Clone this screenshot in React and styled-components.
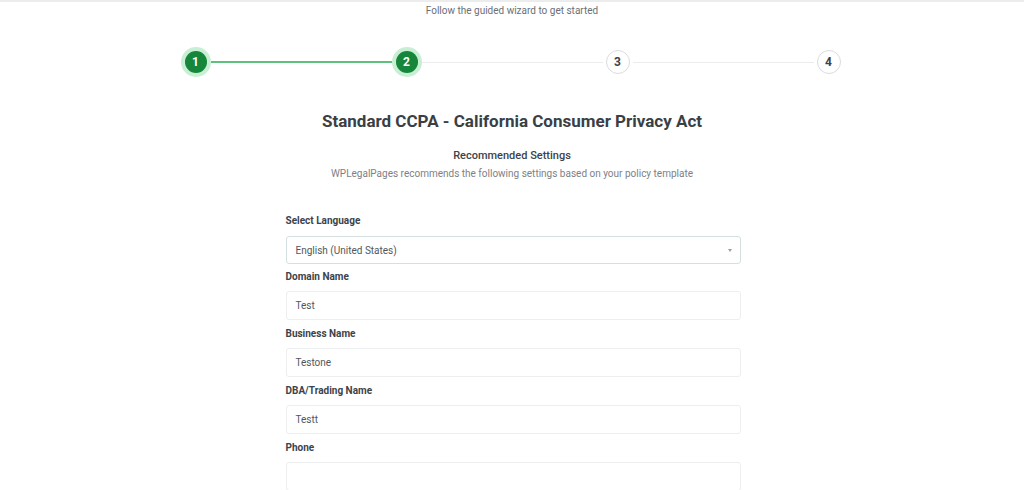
import React from 'react'
import styled, { createGlobalStyle } from 'styled-components'

const GlobalStyle = createGlobalStyle`
  html, body {
    margin: 0;
    padding: 0;
    background: #ffffff;
    font-family: Roboto, "Noto Sans", "Liberation Sans", sans-serif;
  }
`

const steps = [
  { n: 1, done: true },
  { n: 2, done: true },
  { n: 3, done: false },
  { n: 4, done: false },
]

const fields = [
  { label: 'Domain Name', value: 'Test' },
  { label: 'Business Name', value: 'Testone' },
  { label: 'DBA/Trading Name', value: 'Testt' },
  { label: 'Phone', value: '' },
]

function App() {
  return (
    <Page>
      <GlobalStyle />
      <Intro>Follow the guided wizard to get started</Intro>

      <Stepper>
        {steps.map((s, i) => (
          <React.Fragment key={s.n}>
            {i > 0 && <Connector active={s.done} />}
            <StepSlot>
              <StepCircle active={s.done}>{s.n}</StepCircle>
            </StepSlot>
          </React.Fragment>
        ))}
      </Stepper>

      <Title>Standard CCPA - California Consumer Privacy Act</Title>
      <SubTitle>Recommended Settings</SubTitle>
      <Description>WPLegalPages recommends the following settings based on your policy template</Description>

      <Form>
        <Label>Select Language</Label>
        <SelectBox>
          <span>English (United States)</span>
          <Caret />
        </SelectBox>
        {fields.map(f => (
          <React.Fragment key={f.label}>
            <FieldLabel>{f.label}</FieldLabel>
            <Input>{f.value}</Input>
          </React.Fragment>
        ))}
      </Form>
    </Page>
  )
}

export default App

const Page = styled.div`
  border-top: 2px solid #ececec;
  height: 488px;
  overflow: hidden;
`

const Intro = styled.div`
  margin-top: 2px;
  text-align: center;
  font-size: 10px;
  line-height: 14px;
  color: #6b6f75;
`

const Stepper = styled.div`
  width: 663px;
  margin: 29px auto 0;
  display: flex;
  align-items: center;
`

const StepSlot = styled.div`
  width: 30px;
  height: 30px;
  display: flex;
  align-items: center;
  justify-content: center;
  flex-shrink: 0;
`

const StepCircle = styled.div`
  box-sizing: border-box;
  width: ${p => (p.active ? '22px' : '24px')};
  height: ${p => (p.active ? '22px' : '24px')};
  border-radius: 50%;
  display: flex;
  align-items: center;
  justify-content: center;
  font-size: 12px;
  font-weight: 700;
  background: ${p => (p.active ? '#16863a' : '#ffffff')};
  color: ${p => (p.active ? '#ffffff' : '#3c434a')};
  border: ${p => (p.active ? 'none' : '1px solid #d9dcdf')};
  box-shadow: ${p => (p.active ? '0 0 0 4px #c8efd3' : 'none')};
`

const Connector = styled.div`
  flex: 1;
  height: ${p => (p.active ? '2px' : '1px')};
  background: ${p => (p.active ? '#5ec07c' : '#ececec')};
`

const Title = styled.h1`
  margin: 32px 0 0;
  text-align: center;
  font-size: 17px;
  line-height: 24px;
  font-weight: 700;
  color: #3a3f46;
`

const SubTitle = styled.div`
  margin-top: 15px;
  text-align: center;
  font-size: 11px;
  line-height: 16px;
  font-weight: 500;
  color: #3c434a;
`

const Description = styled.div`
  margin-top: 3px;
  text-align: center;
  font-size: 10px;
  line-height: 14px;
  color: #7d8186;
`

const Form = styled.div`
  width: 455px;
  margin: 33px auto 0;
  transform: translateX(1px);
`

const Label = styled.div`
  font-size: 10px;
  line-height: 14px;
  font-weight: 700;
  color: #3c434a;
  margin-bottom: 8px;
`

const FieldLabel = styled(Label)`
  padding-top: 1px;
  margin-bottom: 7px;
`

const Input = styled.div`
  box-sizing: border-box;
  height: 29px;
  margin-bottom: 6px;
  padding: 0 9px;
  display: flex;
  align-items: center;
  border: 1px solid #eceef0;
  border-radius: 3px;
  font-size: 10px;
  color: #50575e;
  background: #fff;
`

const SelectBox = styled(Input)`
  height: 28px;
  margin-bottom: 5px;
  justify-content: space-between;
  border-color: #d4e0e0;
  padding-right: 8px;
`

const Caret = styled.span`
  width: 0;
  height: 0;
  border-left: 2px solid transparent;
  border-right: 2px solid transparent;
  border-top: 3px solid #9aa0a6;
`
